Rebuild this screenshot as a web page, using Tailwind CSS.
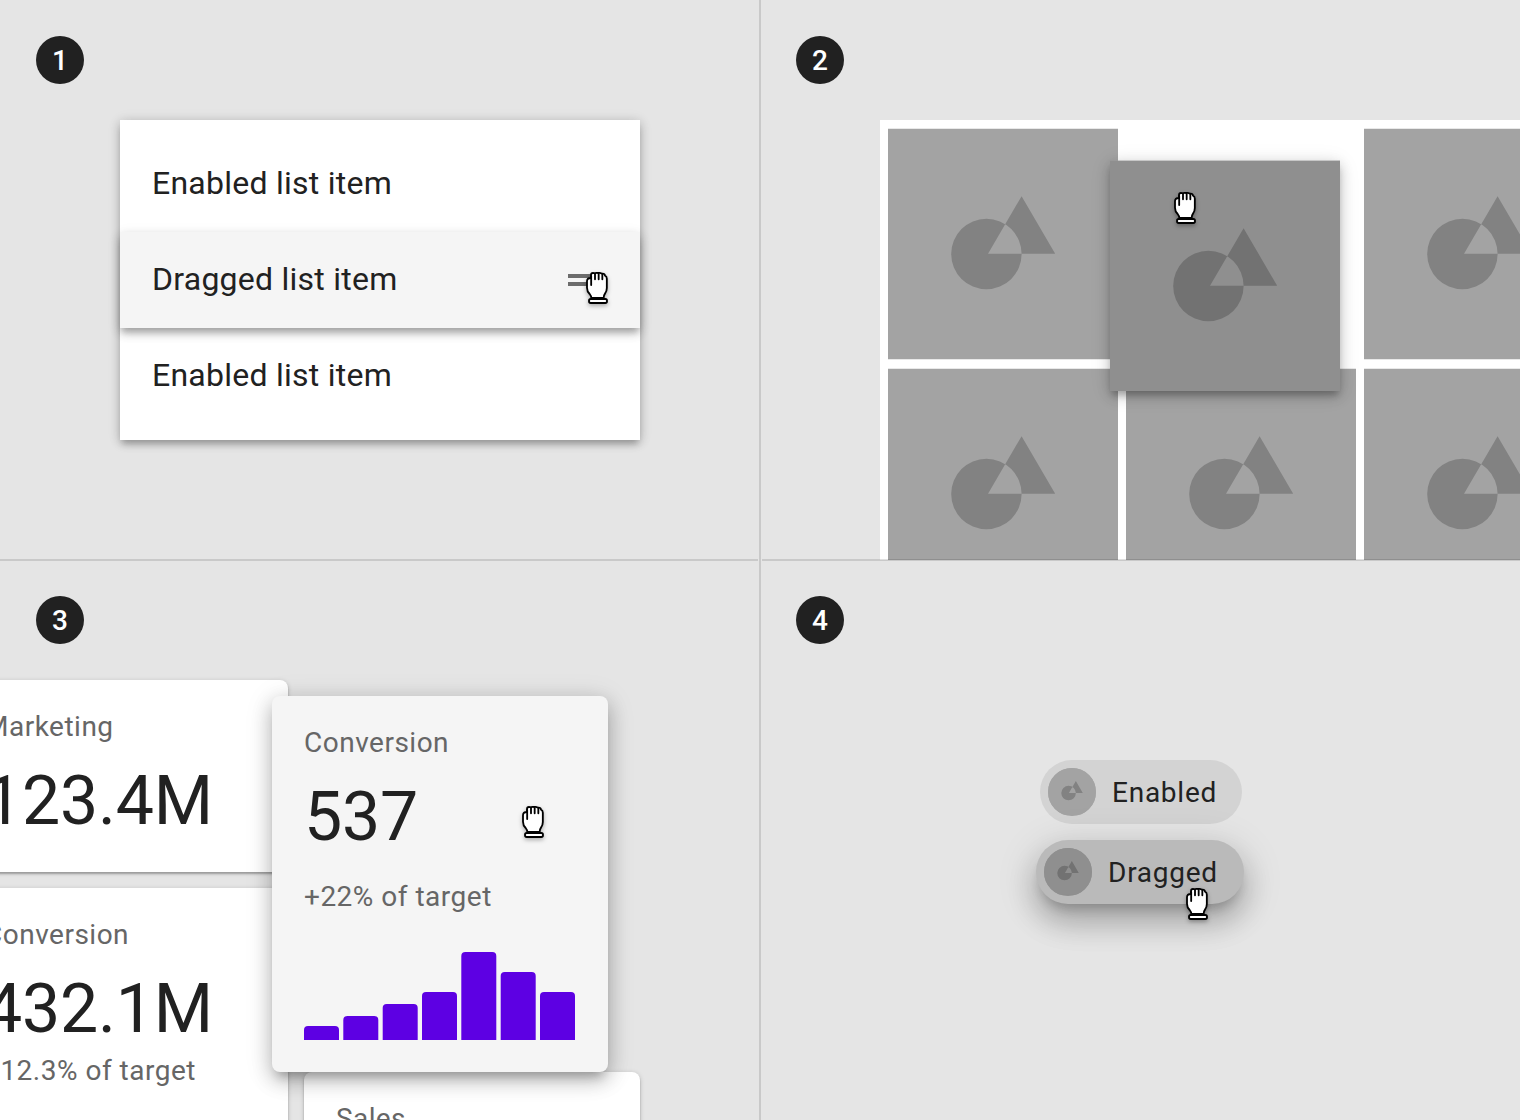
<!DOCTYPE html>
<html lang="en">
<head>
<meta charset="utf-8">
<title>Dragged states</title>
<script src="https://cdn.jsdelivr.net/npm/@tailwindcss/browser@4"></script>
</head>
<body class="bg-[#e5e5e5] font-['Roboto',sans-serif] text-[#212121]">
<svg class="hidden">
  <symbol id="tile" viewBox="0 0 230 232">
    <rect y="0.75" width="230" height="230.5" fill="#a3a3a3"/>
    <path fill="#828282" fill-rule="evenodd" d="M63.2 126a35.2 35.2 0 1 0 70.4 0a35.2 35.2 0 1 0-70.4 0ZM133.6 68.2L167.2 125.8H100Z"/>
  </symbol>
  <symbol id="tile-dragged" viewBox="0 0 230 232">
    <rect y="0.5" width="230" height="230.5" fill="#8f8f8f"/>
    <path fill="#727272" fill-rule="evenodd" d="M63.2 126a35.2 35.2 0 1 0 70.4 0a35.2 35.2 0 1 0-70.4 0ZM133.6 68.2L167.2 125.8H100Z"/>
  </symbol>
  <symbol id="hand" viewBox="0 0 66 96">
    <g fill="#fff" stroke="#000" stroke-width="5.5" stroke-linejoin="round" stroke-linecap="round">
      <path d="M15 18V9Q15 3 21 3Q24.500 3 26 4Q30 2 36.500 3Q43 2 48 5Q56 4 57 11Q62.500 13 62.500 20V48Q62.500 58 57 65Q53 70 53 78H16Q16 72 11 66Q3 58 3 47V28Q3 18 15 18Z"/>
      <path fill="none" d="M15.500 12V39M27 6V22M38 6V22M49 8V22"/>
      <rect x="9" y="81" width="54" height="12" rx="5"/>
    </g>
  </symbol>
</svg>

<main class="relative grid h-[1120px] w-[1520px] grid-cols-2 grid-rows-2 overflow-hidden">

  <!-- List -->
  <section class="relative overflow-hidden pt-9">
    <div class="ml-9 flex size-12 items-center justify-center rounded-full bg-[#212121] pt-0.5 text-[28px] font-medium text-white">1</div>
    <div class="mt-9 ml-[120px] w-[520px] bg-white py-4 text-[32px] leading-[94px] tracking-[0.25px] shadow-[0_6px_6px_-2px_rgba(0,0,0,0.18),0_3px_10px_0_rgba(0,0,0,0.2),0_1px_14px_0_rgba(0,0,0,0.08)]">
      <div class="h-24 px-8">Enabled list item</div>
      <div class="relative flex h-24 items-start justify-between bg-[#f5f5f5] px-8 shadow-[0_6px_6px_-2px_rgba(0,0,0,0.18),0_5px_10px_0_rgba(0,0,0,0.2),0_3px_14px_0_rgba(0,0,0,0.08)]">
        <span>Dragged list item</span>
        <span class="mt-[42px] mr-2 flex w-8 flex-col gap-1"><i class="h-1 bg-[#6c6c6c]"></i><i class="h-1 bg-[#6c6c6c]"></i></span>
        <svg class="absolute top-10 left-[466px] h-8 w-[22px] overflow-visible drop-shadow-[0_2px_2px_rgba(0,0,0,0.3)]"><use href="#hand"/></svg>
      </div>
      <div class="h-24 px-8">Enabled list item</div>
    </div>
  </section>

  <!-- Image grid -->
  <section class="relative overflow-hidden pt-9">
    <div class="ml-9 flex size-12 items-center justify-center rounded-full bg-[#212121] pt-0.5 text-[28px] font-medium text-white">2</div>
    <div class="relative mt-9 ml-[120px] grid w-[722px] grid-cols-[repeat(3,230px)] gap-2 bg-white p-2">
      <svg class="h-[232px] w-[230px]"><use href="#tile"/></svg>
      <span></span>
      <svg class="h-[232px] w-[230px]"><use href="#tile"/></svg>
      <svg class="h-[232px] w-[230px]"><use href="#tile"/></svg>
      <svg class="h-[232px] w-[230px]"><use href="#tile"/></svg>
      <svg class="h-[232px] w-[230px]"><use href="#tile"/></svg>
      <div class="absolute top-10 left-[230px] h-[231px] shadow-[0_6px_6px_-2px_rgba(0,0,0,0.18),0_5px_12px_0_rgba(0,0,0,0.2),0_3px_20px_0_rgba(0,0,0,0.1)]">
        <svg class="block h-[232px] w-[230px]"><use href="#tile-dragged"/></svg>
        <svg class="absolute top-8 left-16 h-8 w-[22px] overflow-visible drop-shadow-[0_2px_2px_rgba(0,0,0,0.3)]"><use href="#hand"/></svg>
      </div>
    </div>
  </section>

  <!-- Cards -->
  <section class="relative overflow-hidden pt-9">
    <div class="ml-9 flex size-12 items-center justify-center rounded-full bg-[#212121] pt-0.5 text-[28px] font-medium text-white">3</div>
    <div class="mt-9 -ml-12 flex w-[688px] items-start gap-4">
      <div class="flex w-[336px] shrink-0 flex-col gap-4">
        <article class="h-48 rounded-lg bg-white px-8 pt-[31px] shadow-[0_2px_2px_0_rgba(0,0,0,0.24),0_1px_5px_0_rgba(0,0,0,0.18)]">
          <p class="text-[28px] leading-8 tracking-[0.5px] text-[#666]">Marketing</p>
          <p class="mt-[18px] text-[68px] leading-20 tracking-[-0.2px]">123.4M</p>
        </article>
        <article class="h-80 rounded-lg bg-white px-8 pt-[31px] shadow-[0_2px_2px_0_rgba(0,0,0,0.24),0_1px_5px_0_rgba(0,0,0,0.18)]">
          <p class="text-[28px] leading-8 tracking-[0.5px] text-[#666]">Conversion</p>
          <p class="mt-[18px] text-[68px] leading-20 tracking-[-0.2px]">432.1M</p>
          <p class="mt-1.5 text-[28px] leading-8 tracking-[0.5px] text-[#666]">+12.3% of target</p>
        </article>
      </div>
      <article class="mt-[392px] h-48 w-[336px] shrink-0 rounded-lg bg-white px-8 pt-[31px] shadow-[0_2px_2px_0_rgba(0,0,0,0.24),0_1px_5px_0_rgba(0,0,0,0.18)]">
        <p class="text-[28px] leading-8 tracking-[0.4px] text-[#666]">Sales</p>
      </article>
    </div>
    <article class="absolute top-[136px] left-[272px] h-[376px] w-[336px] rounded-lg bg-[#f5f5f5] px-8 pt-[31px] shadow-[0_10px_10px_-6px_rgba(0,0,0,0.2),0_8px_20px_0_rgba(0,0,0,0.24),0_4px_28px_2px_rgba(0,0,0,0.1)]">
      <p class="text-[28px] leading-8 tracking-[0.5px] text-[#666]">Conversion</p>
      <p class="mt-[18px] text-[68px] leading-20 tracking-[-0.2px]">537</p>
      <p class="mt-6 text-[28px] leading-8 tracking-[0.5px] text-[#666]">+22% of target</p>
      <svg class="mt-[39px] h-[88px] w-[272px]" fill="#5d00e3" viewBox="0 0 272 88">
        <path d="M0 88V78q0-4 4-4h27q4 0 4 4v10z"/>
        <path d="M39.300 88V68q0-4 4-4h27q4 0 4 4v20z"/>
        <path d="M78.700 88V56q0-4 4-4h27q4 0 4 4v32z"/>
        <path d="M118 88V44q0-4 4-4h27q4 0 4 4v44z"/>
        <path d="M157.300 88V4q0-4 4-4h27q4 0 4 4v84z"/>
        <path d="M196.700 88V24q0-4 4-4h27q4 0 4 4v64z"/>
        <path d="M236 88V44q0-4 4-4h27q4 0 4 4v44z"/>
      </svg>
      <svg class="absolute top-[110px] left-[250px] h-8 w-[22px] overflow-visible drop-shadow-[0_2px_2px_rgba(0,0,0,0.3)]"><use href="#hand"/></svg>
    </article>
  </section>

  <!-- Chips -->
  <section class="relative overflow-hidden pt-9">
    <div class="ml-9 flex size-12 items-center justify-center rounded-full bg-[#212121] pt-0.5 text-[28px] font-medium text-white">4</div>
    <div class="mt-[116px] ml-[276px] flex flex-col items-start gap-4 text-[28px] leading-8 tracking-[0.75px]">
      <div class="ml-1 flex h-16 w-[202px] items-center gap-4 rounded-full bg-[#d3d3d3] pl-2">
        <span class="size-12 shrink-0 overflow-hidden rounded-full bg-[#a3a3a3]"><svg class="-mt-px size-12"><use href="#tile"/></svg></span>
        <span class="pt-0.5">Enabled</span>
      </div>
      <div class="relative flex h-16 w-[208px] items-center gap-4 rounded-full bg-[#bababa] pl-2 shadow-[0_10px_12px_-6px_rgba(0,0,0,0.2),0_18px_28px_2px_rgba(0,0,0,0.2),0_8px_40px_4px_rgba(0,0,0,0.12)]">
        <span class="size-12 shrink-0 overflow-hidden rounded-full bg-[#8f8f8f]"><svg class="-mt-px size-12"><use href="#tile-dragged"/></svg></span>
        <span class="pt-0.5">Dragged</span>
        <svg class="absolute top-12 left-[150px] h-8 w-[22px] overflow-visible drop-shadow-[0_2px_2px_rgba(0,0,0,0.3)]"><use href="#hand"/></svg>
      </div>
    </div>
  </section>

  <!-- Dividers -->
  <i class="absolute top-0 left-[759px] h-full w-0.5 bg-black/12"></i>
  <i class="absolute top-[559px] left-0 h-0.5 w-[758px] bg-black/12"></i>
  <i class="absolute top-[559px] left-[762px] h-0.5 w-[758px] bg-black/12"></i>
</main>
</body>
</html>
